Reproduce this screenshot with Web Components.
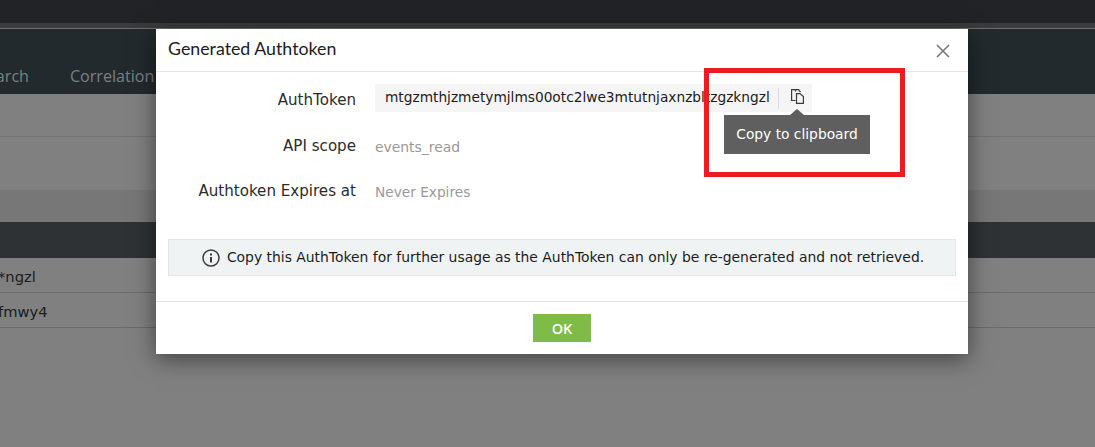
<!DOCTYPE html>
<html>
<head>
<meta charset="utf-8">
<style>
  html, body { margin: 0; height: 100%; overflow: hidden; }
  body { font-family: "DejaVu Sans", sans-serif; background: #808080; }
  field-row:nth-of-type(2) { margin-bottom: 17px; }
</style>
</head>
<body>
<app-backdrop></app-backdrop>
<token-dialog title="Generated Authtoken">
  <field-row label="AuthToken">
    <token-box value="mtgzmthjzmetymjlms00otc2lwe3mtutnjaxnzbltzgzkngzl"></token-box>
  </field-row>
  <field-row label="API scope" muted>events_read</field-row>
  <field-row label="Authtoken Expires at" muted style="--muted-size: 13.7px">Never Expires</field-row>
  <info-note>Copy this AuthToken for further usage as the AuthToken can only be re-generated and not retrieved.</info-note>
</token-dialog>
<mark-box></mark-box>

<script>
class AppBackdrop extends HTMLElement {
  constructor() {
    super();
    this.attachShadow({ mode: "open" });
    this.shadowRoot.innerHTML = `
      <style>
        :host { display: block; height: 447px; background: #808080; color: #1c1c1c; overflow: hidden; }
        .top { height: 23px; background: #222327; }
        .strip { height: 5px; background: #3b3b3b; border-bottom: 1px solid #6f6f6f; }
        nav { height: 65px; box-sizing: border-box; background: #222a2d; color: #7b8083; display: flex; align-items: flex-end; padding-bottom: 8px; gap: 41px; margin-left: -22px; font-family: "Open Sans", sans-serif; font-size: 16.100px; }
        nav span { line-height: 20px; }
        .sub { height: 42px; border-bottom: 1px solid #737373; }
        .gap { height: 53px; }
        .band { height: 32px; background: #777; }
        .head { height: 36px; background: #2e3235; }
        .row { height: 34px; border-bottom: 1px solid #6c6c6c; display: flex; align-items: center; font-size: 14.700px; }
        .row span { margin-left: -2px; padding-top: 2px; }
      </style>
      <div class="top"></div>
      <div class="strip"></div>
      <nav><span>Search</span><span>Correlation</span></nav>
      <div class="sub"></div>
      <div class="gap"></div>
      <div class="band"></div>
      <div class="head"></div>
      <div class="row"><span>*ngzl</span></div>
      <div class="row"><span>fmwy4</span></div>
    `;
  }
}

class TokenDialog extends HTMLElement {
  constructor() {
    super();
    this.attachShadow({ mode: "open" });
  }
  connectedCallback() {
    this.shadowRoot.innerHTML = `
      <style>
        :host { position: absolute; left: 156px; top: 29px; width: 812px; height: 325px; background: #fff; box-shadow: 0 5px 22px rgba(0,0,0,.5); color: #333; display: flex; flex-direction: column; }
        header { height: 43px; box-sizing: border-box; flex: none; border-bottom: 1px solid #e4e4e4; display: flex; align-items: center; justify-content: space-between; padding: 0 18px 5px 12px; font: 17.800px "Lato", sans-serif; color: #1c1c1c; }
        header svg { display: block; margin-top: 7px; }
        main { flex: 1; padding: 12px 12px 0; display: flex; flex-direction: column; }
        footer { height: 53px; box-sizing: border-box; flex: none; border-top: 1px solid #e4e4e4; display: flex; justify-content: center; padding-top: 12px; }
        button { width: 58px; height: 28px; border: 0; background: #7fbb47; color: #fff; font: 600 14.500px "Open Sans", sans-serif; padding: 0; }
      </style>
      <header>
        <span>${this.getAttribute("title")}</span>
        <svg width="14" height="14" viewBox="0 0 14 14" fill="none" stroke="#777" stroke-width="1.6"><path d="M1 1 13 13M13 1 1 13"/></svg>
      </header>
      <main><slot></slot></main>
      <footer><button>OK</button></footer>
    `;
  }
}

class FieldRow extends HTMLElement {
  constructor() {
    super();
    this.attachShadow({ mode: "open" });
  }
  connectedCallback() {
    this.shadowRoot.innerHTML = `
      <style>
        :host { display: flex; align-items: center; height: 28px; margin-bottom: 18px; font-size: 15.100px; }
        label { width: 188px; padding-top: 4px; text-align: right; color: #2b2b2b; flex: none; }
        div { margin-left: 19px; min-width: 0; }
        :host([muted]) div { color: #999; font-size: var(--muted-size, 13.900px); padding-top: 6px; }
      </style>
      <label>${this.getAttribute("label")}</label>
      <div><slot></slot></div>
    `;
  }
}

class TokenBox extends HTMLElement {
  constructor() {
    super();
    this.attachShadow({ mode: "open" });
  }
  connectedCallback() {
    this.shadowRoot.innerHTML = `
      <style>
        :host { display: flex; align-items: center; position: relative; width: 437px; height: 28px; box-sizing: border-box; background: #f5f5f5; padding-left: 10px; color: #1c1c1c; font-size: 13.720px; }
        .val { width: 393px; flex: none; white-space: nowrap; padding-bottom: 3px; }
        .sep { width: 1px; height: 21px; background: #ddd; flex: none; }
        svg { margin: -3px 0 0 12px; display: block; }
        .tip { position: absolute; left: 349px; top: 31px; width: 146px; height: 39px; box-sizing: border-box; padding-bottom: 2px; background: #5f5f5f; color: #fff; display: flex; align-items: center; justify-content: center; font-size: 13.800px; white-space: nowrap; }
        .tip::before { content: ""; position: absolute; left: 66px; top: -6px; border: 7px solid transparent; border-top: 0; border-bottom: 6px solid #5f5f5f; }
      </style>
      <span class="val">${this.getAttribute("value")}</span>
      <span class="sep"></span>
      <svg width="13" height="15" viewBox="0 0 13 15" fill="none" stroke="#3a3a3a" stroke-width="1.200"><path d="M4.500 2.500V.6H7.500L9.500 3M4.500 11.500H.6V.6H4.500"/><path d="M5.500 4.600H9L12.400 7.600V14.400H5.500Z"/></svg>
      <div class="tip">Copy to clipboard</div>
    `;
  }
}

class InfoNote extends HTMLElement {
  constructor() {
    super();
    this.attachShadow({ mode: "open" });
    this.shadowRoot.innerHTML = `
      <style>
        :host { display: flex; align-items: center; justify-content: center; gap: 7px; height: 37px; box-sizing: border-box; margin-top: 18px; padding: 0 0 1px 2px; background: #eff3f4; border: 1px solid #e3e6e7; font-size: 13.900px; color: #1c1c1c; white-space: nowrap; }
        svg { flex: none; display: block; margin-top: 1px; }
      </style>
      <svg width="18" height="18" viewBox="0 0 18 18" fill="none" stroke="#3a3a3a" stroke-width="1.500"><circle cx="9" cy="9" r="8"/><path d="M9 8V13.500" stroke-width="2"/><path d="M9 4.500V6.500" stroke-width="2"/></svg>
      <span><slot></slot></span>
    `;
  }
}

class MarkBox extends HTMLElement {
  constructor() {
    super();
    this.attachShadow({ mode: "open" });
    this.shadowRoot.innerHTML = `
      <style>
        :host { display: block; position: absolute; left: 704px; top: 68px; width: 201px; height: 109px; box-sizing: border-box; border: 5px solid #ed1c24; pointer-events: none; }
      </style>
    `;
  }
}

customElements.define("app-backdrop", AppBackdrop);
customElements.define("token-dialog", TokenDialog);
customElements.define("field-row", FieldRow);
customElements.define("token-box", TokenBox);
customElements.define("info-note", InfoNote);
customElements.define("mark-box", MarkBox);
</script>
</body>
</html>
